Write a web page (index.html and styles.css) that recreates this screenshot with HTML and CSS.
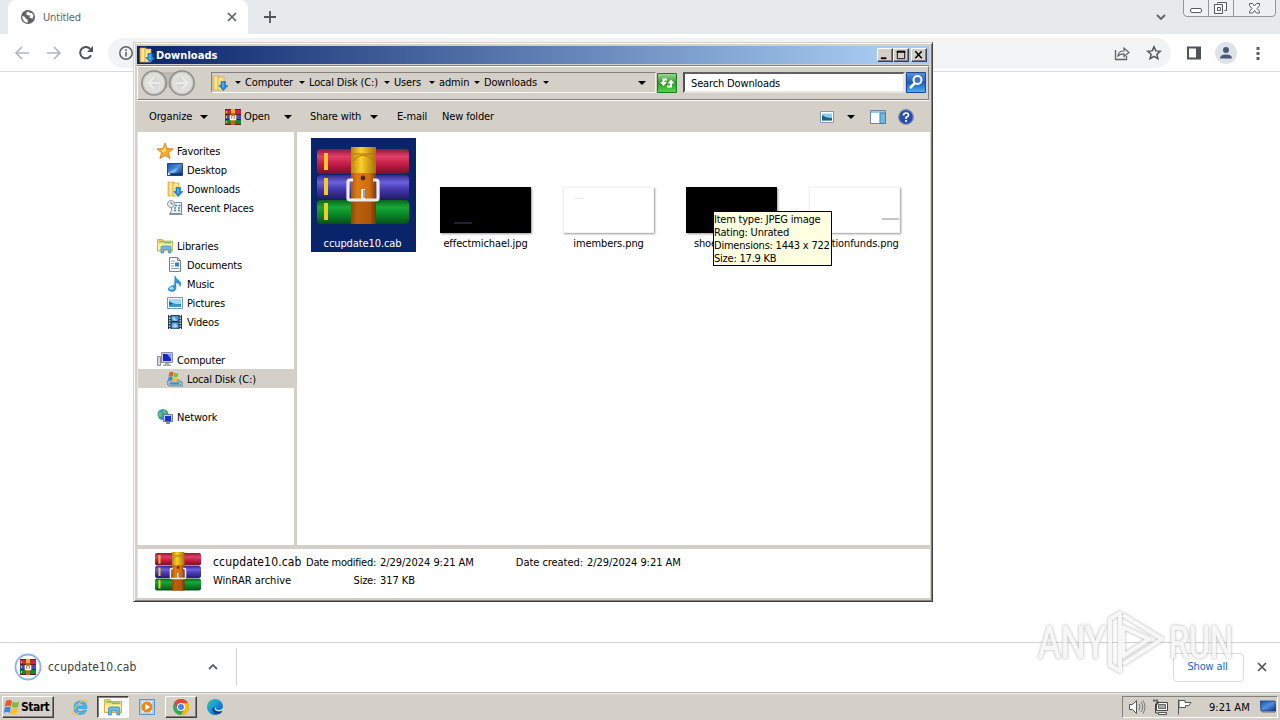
FILE: index.html
```html
<!DOCTYPE html>
<html lang="en">
<head>
<meta charset="utf-8">
<title>Downloads</title>
<link rel="stylesheet" href="styles.css">
</head>
<body>
<svg class="defs" aria-hidden="true">
<defs>
<linearGradient id="gr" x1="0" y1="0" x2="0" y2="1"><stop offset="0" stop-color="#8c1838"/><stop offset=".3" stop-color="#e04068"/><stop offset=".6" stop-color="#c41c44"/><stop offset="1" stop-color="#74102c"/></linearGradient>
<linearGradient id="gb" x1="0" y1="0" x2="0" y2="1"><stop offset="0" stop-color="#34288c"/><stop offset=".3" stop-color="#6c60dc"/><stop offset=".6" stop-color="#4438b0"/><stop offset="1" stop-color="#241c68"/></linearGradient>
<linearGradient id="gg" x1="0" y1="0" x2="0" y2="1"><stop offset="0" stop-color="#0a6418"/><stop offset=".3" stop-color="#18a838"/><stop offset=".6" stop-color="#0a8828"/><stop offset="1" stop-color="#065018"/></linearGradient>
<linearGradient id="gs"><stop offset="0" stop-color="#a85808"/><stop offset=".25" stop-color="#e07c14"/><stop offset=".75" stop-color="#d06c10"/><stop offset="1" stop-color="#7c3c04"/></linearGradient>
<linearGradient id="gy"><stop offset="0" stop-color="#b88410"/><stop offset=".4" stop-color="#fcd028"/><stop offset="1" stop-color="#a87008"/></linearGradient>
<linearGradient id="gf"><stop offset="0" stop-color="#e8bc50"/><stop offset=".5" stop-color="#fff0a0"/><stop offset="1" stop-color="#e4c050"/></linearGradient>
<linearGradient id="gscr" x1="0" y1="0" x2="1" y2="1"><stop offset="0" stop-color="#1450a8"/><stop offset=".5" stop-color="#5090dc"/><stop offset="1" stop-color="#082c78"/></linearGradient>
<linearGradient id="gedge" x1="0" y1="0" x2="1" y2="1"><stop offset="0" stop-color="#38c878"/><stop offset=".4" stop-color="#18a0dc"/><stop offset="1" stop-color="#0848a0"/></linearGradient>
<linearGradient id="ggo" x1="0" y1="0" x2="0" y2="1"><stop offset="0" stop-color="#5c94dc"/><stop offset=".5" stop-color="#2058c0"/><stop offset="1" stop-color="#48b8f0"/></linearGradient>
<linearGradient id="gref" x1="0" y1="0" x2="0" y2="1"><stop offset="0" stop-color="#a0d898"/><stop offset=".5" stop-color="#289c30"/><stop offset="1" stop-color="#58d848"/></linearGradient>
<radialGradient id="gbtn"><stop offset="0" stop-color="#d0d0cc"/><stop offset=".75" stop-color="#e2e2de"/><stop offset="1" stop-color="#b0b0ac"/></radialGradient>
<symbol id="rar" viewBox="0 0 92 78" preserveAspectRatio="none">
<rect y="2" width="92" height="25" rx="4" fill="url(#gr)"/><rect y="28" width="92" height="24" rx="4" fill="url(#gb)"/><rect y="53" width="92" height="24" rx="4" fill="url(#gg)"/>
<path d="M7 6h4v17h-4zM7 31h4v17h-4zM7 56h4v17h-4z" fill="#f8c828"/>
<rect x="34" y="26" width="25" height="51" fill="url(#gs)"/>
<path d="M34 53h25v24H34z" fill="#702c00" opacity=".35"/>
<path d="M34 0h25v26H34z" fill="url(#gy)"/><path d="M36 14q10-12 21 0M36 7h20" fill="none" stroke="#a87408" stroke-width="1"/>
<circle cx="46" cy="31" r="2.400" fill="#5c2804"/>
<path d="M36 33h-3q-2 0-2 2v16q0 2 2 2h26q2 0 2-2V35q0-2-2-2h-3" fill="none" stroke="#ececec" stroke-width="3.200"/><path d="M46 42v11" stroke="#f0f0f0" stroke-width="4"/><path d="M47 43v8" stroke="#555"/>
</symbol>
<symbol id="rars" viewBox="0 0 16 16"><path d="M0 1h16v4H0z" fill="#cc2448"/><path d="M0 6h16v4H0z" fill="#4848b8"/><path d="M0 11h16v4H0z" fill="#108830"/><path d="M0 0h16v1H0zM0 5h16v1H0zM0 10h16v1H0zM0 15h16v1H0z" fill="#58202c"/><path d="M1 2h1v2H1zM1 7h1v2H1zM1 12h1v2H1z" fill="#fc0"/><path d="M6 0h4v16H6z" fill="#c46810"/><path d="M6 0h4v4H6z" fill="#ecb428"/><path d="M5.500 6v4.500h5V6M8 7v3" fill="none" stroke="#fff" stroke-width="1.500"/></symbol>
<symbol id="dl" viewBox="0 0 16 16"><path d="M1 1h6v14H1z" fill="url(#gf)" stroke="#d8ac40" stroke-width=".7"/><path d="M6 2h6v13H6z" fill="#fae48c" stroke="#d0a840" stroke-width=".7"/><path d="M9 6.500h4.500v4H16l-4.700 5-4.500-5H9z" fill="#2888d8" stroke="#1464b0" stroke-width=".6"/><path d="M11 7.500v5" stroke="#80c8fc"/></symbol>
<symbol id="star" viewBox="0 0 16 16"><path d="M8 0l2.200 5.600 5.800.3-4.500 3.900 1.600 5.800L8 12.500l-5.100 3.100 1.600-5.800L0 5.900l5.800-.3z" fill="#fca828" stroke="#d87820" stroke-width=".8"/><path d="M8 3l1 4.500L6 9.500 4 7.300l2.800-.5z" fill="#ffe890"/></symbol>
<symbol id="desk" viewBox="0 0 16 16"><path d="M.5 1.500h15v12H.5z" fill="url(#gscr)" stroke="#20488c"/><path d="M1 11.500h14v1.500H1z" fill="#0c2c68"/><path d="M1 12q4-5 10-6l-2 4z" fill="#a4d4f8" opacity=".55"/><path d="M1 10l2.500 3H1z" fill="#e0ecf8"/></symbol>
<symbol id="recent" viewBox="0 0 16 16"><path d="M4.500 2.500h10v11H3l1.500-3z" fill="#eef4f8" stroke="#7888a0"/><path d="M2 13.500h13l1 1.500H2z" fill="#8898a8"/><path d="M8 5.500h2M11.500 5.500h2M7 8h2M11 8h2M7 10.500h2M11 10.500h2" stroke="#4880b8" stroke-width="1.300"/><circle cx="4" cy="4" r="3.500" fill="#e8f0f4" stroke="#8898a8"/><path d="M4 2v2h2" fill="none" stroke="#506070" stroke-width=".8"/></symbol>
<symbol id="lib" viewBox="0 0 16 16"><path d="M.5 13V1.500h5l1 1.500h9v10z" fill="#f8dc78" stroke="#c8a440" stroke-width=".8"/><path d="M2 3.500h5M7 4.500h7" stroke="#80bc68" stroke-width="1.500"/><path d="M1 6h14v6H1z" fill="#fff0a0"/><path d="M4 15V9.500q0-1.500 1.500-1.500h7Q14 8 14 9.500V15h-2.500v-3.500h-5V15z" fill="#70b8e8" stroke="#3880b4" stroke-width=".7"/></symbol>
<symbol id="doc" viewBox="0 0 16 16"><path d="M2.500.5h8l3 3v11h-11z" fill="#f8fcff" stroke="#708098"/><path d="M4 4h4M4 6.500h3M4 9h3M4 11.500h8" stroke="#88a8c8"/><path d="M8 5.500h4v4H8z" fill="#3880c8"/><path d="M10.500.5v3h3" fill="none" stroke="#708098"/></symbol>
<symbol id="music" viewBox="0 0 16 16"><path d="M8 0q1 3 4 4.500 3 2 1 6 .3-3-4-4v6Q8 16 4.500 15.500 0 14.500 1.500 12 4 9 7.500 9.500z" fill="#2c98dc" stroke="#1878bc" stroke-width=".5"/><ellipse cx="4.500" cy="12.300" rx="2.200" ry="1.500" fill="#9cdcfc"/></symbol>
<symbol id="pic" viewBox="0 0 16 16"><path d="M.5 2.500h15v11H.5z" fill="#fff" stroke="#7898b0"/><path d="M2 4h12v8H2z" fill="#98dcf4"/><path d="M2 6q5 4 12 3v3H2z" fill="#18608c"/><path d="M2 10q5-2 12 0v2H2z" fill="#389cc0"/></symbol>
<symbol id="video" viewBox="0 0 16 16"><path d="M1 1h14v14H1z" fill="#283848"/><path d="M4.500 2h7v5h-7zM4.500 8.500h7v6h-7z" fill="#4898dc"/><path d="M6 2l4 4-2 1-3-2zM5 12l3-3 3 3-3 2z" fill="#9cd0f4"/><path d="M2.700 1v14M13.300 1v14" stroke="#e8f0f4" stroke-width="1.400" stroke-dasharray="1.300 1.300"/></symbol>
<symbol id="comp" viewBox="0 0 16 16"><path d="M.5 4.500h3v9h-3z" fill="#d8d8dc" stroke="#888c98"/><path d="M4.500.5h11v10h-11z" fill="#c8ccd8" stroke="#8890a0"/><path d="M6 2h8v7H6z" fill="#1824c0"/><path d="M10 2h4v5z" fill="#78a0fc"/><path d="M8 11h4v1.500h2V14H6v-1.500h2z" fill="#a8a8b0"/></symbol>
<symbol id="flag" viewBox="0 0 16 16"><path d="M2 2q3-2 6 0L7 7.500q-3-1.500-6.200 0z" fill="#ec5828"/><path d="M8.800 2.500q3 2 6.200 0L14 8q-3 1.500-6.200 0z" fill="#78c030"/><path d="M.8 8.500q3-1.500 6 0l-1 5.500q-3-2-5.800 0z" fill="#3c88dc"/><path d="M7.500 9q3 1.500 6.200 0l-1 5.500q-3 2-6.200 0z" fill="#fcc020"/></symbol>
<symbol id="disk" viewBox="0 0 16 16"><path d="M1 9h11l4 3v3H2l-2-2z" fill="#a8b8c0" stroke="#607880" stroke-width=".7"/><path d="M3 11.500h11v2H3z" fill="#289ca8"/><path d="M12 12h2v1h-2z" fill="#70fc50"/><use href="#flag" x="1" y="0" width="11" height="11"/></symbol>
<symbol id="net" viewBox="0 0 16 16"><circle cx="6" cy="5.500" r="5.500" fill="#3890c8"/><path d="M2 3q4 0 3 3T1 8zM5 1q4 0 5 3L7 5z" fill="#68c458"/><path d="M6.500 5.500h9v7h-9z" fill="#c8ccd8" stroke="#687898"/><path d="M8 7h6v5H8z" fill="#1830cc"/><path d="M9 13h4v2H9z" fill="#889"/></symbol>
<symbol id="monitor" viewBox="0 0 16 16"><path d="M0 2h15l1 10H1z" fill="url(#gscr)" stroke="#183c78" stroke-width=".8"/><path d="M2 13h13" stroke="#687078"/></symbol>
<symbol id="dn" viewBox="0 0 8 4" preserveAspectRatio="none"><path d="M0 0h8L4 4z"/></symbol>
<symbol id="chev" viewBox="0 0 10 6"><path d="M1 1l4 4 4-4" fill="none" stroke="currentColor" stroke-width="1.800"/></symbol>
<symbol id="x" viewBox="0 0 10 10"><path d="M1 1l8 8M9 1L1 9" stroke="currentColor" stroke-width="1.700"/></symbol>
</defs>
</svg>

<div class="browser">
  <div class="tabstrip">
    <div class="tab">
      <svg class="globe" viewBox="0 0 14 14"><circle cx="7" cy="7" r="7" fill="#5f6368"/><path d="M1.300 6q3 0 3.200 2.500 2.500 0 2.300 4.200Q2 12.500 1.300 7zM5.500 2.500L8 1.500l.5 1.500H11l1.500 2.500-1 3.200L8.500 7.500 9 5.500 5.500 5z" fill="#fff"/></svg>
      <span class="tab-title">Untitled</span>
      <svg class="tab-x"><use href="#x"/></svg>
    </div>
    <svg class="plus" viewBox="0 0 12 12"><path d="M6 0v12M0 6h12" stroke="#505458" stroke-width="1.800"/></svg>
    <svg class="tab-search"><use href="#chev"/></svg>
    <svg class="caption" viewBox="0 0 93 18"><path d="M.5-1v14q0 3.500 3.500 3.500h85q3.500 0 3.500-3.500V-1M25.500 0v16M50.500 0v16" fill="#eef1f3" stroke="#92979c"/><rect x="7.500" y="8.500" width="11" height="4" rx="1.500" fill="#fff" stroke="#55595e"/><path d="M34.500 3.500v-1h9v8h-2M31.500 4.500h8v9h-8zM34.500 7.500h3v3h-3z" fill="#fff" stroke="#55595e"/><path d="M66.500 3.500h3l2 2.500 2-2.500h3v2L74 8.500l2.500 3v1.500h-3l-2-2.500-2 2.500h-3v-1.500l2.500-3-2.500-3z" fill="#fff" stroke="#55595e"/></svg>
  </div>
  <div class="toolbar">
    <svg class="nav-arrow" viewBox="0 0 14 14"><path d="M14 7H1M7 1L1 7l6 6" fill="none" stroke="#b4b7ba" stroke-width="1.700"/></svg>
    <svg class="nav-arrow" viewBox="0 0 14 14"><path d="M0 7h13M7 1l6 6-6 6" fill="none" stroke="#b4b7ba" stroke-width="1.700"/></svg>
    <svg class="reload" viewBox="0 0 14 14"><path d="M12 9.200A5.700 5.700 0 1 1 11.300 3" fill="none" stroke="#505458" stroke-width="2"/><path d="M14 0v6H8z" fill="#505458"/></svg>
    <div class="omnibox">
      <svg class="info" viewBox="0 0 14 14"><circle cx="7" cy="7" r="6.200" fill="none" stroke="#5f6368" stroke-width="1.500"/><path d="M7 6v4.500M7 3.300v1.600" stroke="#5f6368" stroke-width="1.600"/></svg>
      <svg class="share" viewBox="0 0 16 16"><path d="M1.500 5v9.500h11V11" fill="none" stroke="#5f6368" stroke-width="1.300"/><path d="M4 11q0-5 6-5V3l5 4.500L10 11.500V8.800q-4 0-6 2.200z" fill="none" stroke="#5f6368" stroke-width="1.200"/></svg>
      <svg class="mark" viewBox="0 0 16 16"><path d="M8 1.800l1.800 4.100 4.500.4-3.400 3 1 4.400L8 11.400l-3.900 2.300 1-4.400-3.400-3 4.500-.4z" fill="none" stroke="#505458" stroke-width="1.500"/></svg>
    </div>
    <svg class="panel" viewBox="0 0 14 14"><path d="M1 1.500h12v11H1z" fill="none" stroke="#505458" stroke-width="2"/><path d="M9 1h5v12H9z" fill="#505458"/></svg>
    <svg class="avatar" viewBox="0 0 22 22"><circle cx="11" cy="11" r="11" fill="#dfe2e7"/><circle cx="11" cy="8" r="3" fill="#4b5878"/><path d="M5 16.500q0-4 6-4t6 4z" fill="#4b5878"/></svg>
    <svg class="kebab" viewBox="0 0 4 14"><path d="M.5 1h3v3h-3zM.5 6h3v3h-3zM.5 11h3v3h-3z" fill="#5f6368"/></svg>
  </div>
  <div class="page"></div>
  <div class="shelf">
    <div class="download">
      <svg class="ring" viewBox="0 0 28 28"><circle cx="14" cy="14" r="12.500" fill="#fff" stroke="#8ab0ec" stroke-width="1.800"/><use href="#rars" x="6" y="6" width="16" height="16"/></svg>
      <span class="download-name">ccupdate10.cab</span>
      <svg class="up"><use href="#chev"/></svg>
    </div>
    <button class="show-all">Show all</button>
    <svg class="shelf-x"><use href="#x"/></svg>
  </div>
</div>

<div class="taskbar">
  <div class="start"><svg class="i16"><use href="#flag"/></svg><b>Start</b></div>
  <div class="quick ie"><svg class="i18" viewBox="0 0 18 18"><path d="M16 10.500H6q.4 3 3.500 3 1.700 0 2.600-1.200h3.400Q14 16.500 9.500 16.500q-6.500 0-6.500-6.700T9.500 3q6.500 0 6.500 7.500zM6 8h7Q12.500 5.800 9.500 5.800T6 8z" fill="#48b4ec" stroke="#1c80c0" stroke-width=".5"/><path d="M15.500 6q2.500-5-1.500-4-5 1.500-9.500 7-5 7-1 7 2 0 4.500-1.500" fill="none" stroke="#ecc448" stroke-width="1.100"/></svg></div>
  <div class="quick folder"><svg class="i18"><use href="#lib"/></svg></div>
  <div class="quick wmp"><svg class="i16" viewBox="0 0 16 16"><path d="M.5.5h15v15H.5z" fill="#a8d4f4" stroke="#5894c8"/><path d="M3 2.500h10v11H3z" fill="#e8f4fc"/><circle cx="8" cy="8" r="5.500" fill="#f48418"/><path d="M6.200 4.800l5 3.200-5 3.200z" fill="#fff"/></svg></div>
  <div class="quick chrome"><svg class="i16" viewBox="0 0 16 16"><circle cx="8" cy="8" r="8" fill="#34a853"/><path d="M1.100 4A8 8 0 0 1 14.900 4H8L4.500 10z" fill="#ea4335"/><path d="M14.900 4A8 8 0 0 1 8 16l3.500-6L8 4z" fill="#fbbc05"/><circle cx="8" cy="8" r="4" fill="#fff"/><circle cx="8" cy="8" r="3" fill="#4285f4"/></svg></div>
  <div class="quick edge"><svg class="i16" viewBox="0 0 16 16"><circle cx="8" cy="8" r="8" fill="url(#gedge)"/><path d="M7 8q-3 1.500-1 4.500 2 3 7 2 2-1 2.500-2.500-4 2-7.500-.5-1.200-1-1-3.500z" fill="#0c3c90"/><path d="M8.500 8q0 3 3 3 4 0 4.500-3v3q-3 2-6 1-3.500-1.500-1.500-4z" fill="#d4e8e8"/></svg></div>
  <div class="tray">
    <svg class="i18" viewBox="0 0 18 18"><path d="M1.500 6.500h3l4-4v13l-4-4h-3z" fill="#fff" stroke="#555"/><path d="M11 6q2 3 0 6M13 4q3.500 5 0 10M15 2.500q4 6.500 0 13" fill="none" stroke="#777"/></svg>
    <svg class="i18" viewBox="0 0 18 18"><path d="M4.500 4.500h11v8h-11z" fill="#fff" stroke="#444"/><path d="M6.500 6.500h7v4h-7z" fill="#aaa" stroke="#666"/><path d="M6.500 14.500h8v2h-8z" fill="#fff" stroke="#555"/><path d="M2 1v2M5 1v2M1 3h5v3H3.500v9H6" fill="none" stroke="#444"/></svg>
    <svg class="i18" viewBox="0 0 18 18"><path d="M2.500 1.500v15M3 2.500h6v2h6l-2 3H9.500v2H3z" fill="#fff" stroke="#555"/></svg>
    <span class="clock">9:21 AM</span>
    <svg class="i16"><use href="#monitor"/></svg>
  </div>
</div>

<div class="window">
  <div class="titlebar">
    <svg class="i16"><use href="#dl"/></svg><b>Downloads</b>
    <svg class="wbtn" viewBox="0 0 15 13"><path d="M3 9h6v2H3z"/></svg><svg class="wbtn" viewBox="0 0 15 13"><path d="M3.500 2.500h8v8h-8zM3 2.800h9" fill="none" stroke="#000"/><path d="M3 2h9v2H3z"/></svg><svg class="wbtn last" viewBox="0 0 15 13"><path d="M3.500 2.500l7 7.500M10.500 2.500l-7 7.500" stroke="#000" stroke-width="1.600"/></svg>
  </div>
  <div class="rebar">
    <svg class="backfwd" viewBox="0 0 56 28"><path d="M14 3h28v18q-14-5-28 0z" fill="#bdb9b2"/><circle cx="14" cy="14" r="12.200" fill="url(#gbtn)" stroke="#8a8a84" stroke-width="1.300"/><circle cx="42" cy="14" r="12.200" fill="url(#gbtn)" stroke="#8a8a84" stroke-width="1.300"/><path d="M20 14H9M14 8.500L8.500 14l5.500 5.500M36 14h11M42 8.500l5.500 5.500-5.500 5.500" fill="none" stroke="#ececea" stroke-width="2"/></svg>
    <div class="address">
      <svg class="i16"><use href="#dl"/></svg>
      <svg class="sep"><use href="#dn"/></svg><span class="c1">Computer</span>
      <svg class="sep"><use href="#dn"/></svg><span class="c2">Local Disk (C:)</span>
      <svg class="sep"><use href="#dn"/></svg><span class="c3">Users</span>
      <svg class="sep"><use href="#dn"/></svg><span class="c4">admin</span>
      <svg class="sep"><use href="#dn"/></svg><span class="c5">Downloads</span>
      <svg class="sep"><use href="#dn"/></svg>
      <svg class="drop"><use href="#dn"/></svg>
    </div>
    <svg class="refresh" viewBox="0 0 20 20"><path d="M.5.5h19v19H.5z" fill="url(#gref)" stroke="#187c20"/><path d="M10 6.500H6.500V10M10 13.500h4V10" fill="none" stroke="#fff" stroke-width="2"/><path d="M3 9h7l-3.500 4zM10.500 10.500h7L14 6.500z" fill="#fff"/></svg>
    <div class="search">Search Downloads</div>
    <svg class="go" viewBox="0 0 20 21"><path d="M.5.500h19v20H.5z" fill="url(#ggo)" stroke="#184898"/><circle cx="11.500" cy="8" r="4" fill="#3c74cc" stroke="#fff" stroke-width="2"/><path d="M9 11l-5 5" stroke="#fff" stroke-width="2.500"/></svg>
  </div>
  <div class="commands">
    <span class="m1">Organize</span><svg class="tri"><use href="#dn"/></svg>
    <svg class="i16 openicon"><use href="#rars"/></svg><span class="m2">Open</span><svg class="tri"><use href="#dn"/></svg>
    <span class="m3">Share with</span><svg class="tri"><use href="#dn"/></svg>
    <span class="m4">E-mail</span><span class="m5">New folder</span>
    <svg class="view" viewBox="0 0 14 12" preserveAspectRatio="none"><path d="M.5.5h13v11H.5z" fill="#fff" stroke="#8898a8"/><path d="M2 2.500h10v7H2z" fill="#88d0f0"/><path d="M2 4q4 3 10 3v2.500H2z" fill="#18608c"/></svg><svg class="tri viewtri"><use href="#dn"/></svg>
    <svg class="preview" viewBox="0 0 16 14"><path d="M.5.5h15v13H.5z" fill="#fff" stroke="#6888a8"/><path d="M1 1h14v2H1z" fill="#a0c4e4"/><path d="M10 3h5.500v10.500H10z" fill="#70b8e0" stroke="#4080b0"/></svg>
    <svg class="help" viewBox="0 0 16 16"><circle cx="8" cy="8" r="7.300" fill="#284cb4" stroke="#7c88a8" stroke-width="1.200"/><path d="M5.500 6.500Q5.500 4 8 4t2.500 2.200Q10.500 7.500 8 8.300V10M8 11v2" fill="none" stroke="#fff" stroke-width="1.700"/></svg>
  </div>
  <div class="content">
    <div class="sidebar">
      <div class="item top"><svg class="i16"><use href="#star"/></svg>Favorites</div>
      <div class="item"><svg class="i16"><use href="#desk"/></svg>Desktop</div>
      <div class="item"><svg class="i16"><use href="#dl"/></svg>Downloads</div>
      <div class="item"><svg class="i16"><use href="#recent"/></svg>Recent Places</div>
      <div class="item top"><svg class="i16"><use href="#lib"/></svg>Libraries</div>
      <div class="item"><svg class="i16"><use href="#doc"/></svg>Documents</div>
      <div class="item"><svg class="i16"><use href="#music"/></svg>Music</div>
      <div class="item"><svg class="i16"><use href="#pic"/></svg>Pictures</div>
      <div class="item"><svg class="i16"><use href="#video"/></svg>Videos</div>
      <div class="item top"><svg class="i16"><use href="#comp"/></svg>Computer</div>
      <div class="item selected"><svg class="i16"><use href="#disk"/></svg>Local Disk (C:)</div>
      <div class="item top"><svg class="i16"><use href="#net"/></svg>Network</div>
    </div>
    <div class="files">
      <div class="file picked"><svg class="big"><use href="#rar"/></svg><span>ccupdate10.cab</span></div>
      <div class="file"><div class="thumb dark"><i class="streak s1"></i></div><span>effectmichael.jpg</span></div>
      <div class="file"><div class="thumb"><i class="streak s2"></i></div><span>imembers.png</span></div>
      <div class="file"><div class="thumb dark"></div><span class="short">shoe.jpg</span></div>
      <div class="file"><div class="thumb"><i class="streak s3"></i></div><span class="long">auctionfunds.png</span></div>
    </div>
  </div>
  <div class="details">
    <svg class="dicon"><use href="#rar"/></svg>
    <div class="dname"><span class="large">ccupdate10.cab</span><span>WinRAR archive</span></div>
    <div class="dlabel"><span>Date modified:</span><span>Size:</span></div>
    <div class="dvalue"><span>2/29/2024 9:21 AM</span><span>317 KB</span></div>
    <div class="dlabel created"><span>Date created:</span></div>
    <div class="dvalue"><span>2/29/2024 9:21 AM</span></div>
  </div>
</div>

<div class="tooltip">Item type: JPEG image<br>Rating: Unrated<br>Dimensions: 1443 x 722<br>Size: 17.9 KB</div>

<svg class="watermark" viewBox="0 0 210 80"><g class="mark-text"><text x="8" y="56" textLength="68" lengthAdjust="spacingAndGlyphs">ANY</text><text x="139" y="56" textLength="64" lengthAdjust="spacingAndGlyphs">RUN</text></g><g class="mark-logo"><path d="M80 17v46l10 6V11z"/><path d="M93 13l39 24-39 25M93 25v29l26-17z"/></g></svg>
</body>
</html>
```
FILE: styles.css
```css
* { box-sizing: border-box; }
body {
  margin: 0;
  width: 1280px;
  height: 720px;
  overflow: hidden;
  position: relative;
  display: flex;
  flex-direction: column;
  background: #fff;
  color: #000;
  font: 11px/13px "DejaVu Sans Condensed", "DejaVu Sans", sans-serif;
  font-stretch: condensed;
  letter-spacing: -0.15px;
  white-space: nowrap;
}
svg { flex: none; display: block; }
.defs { position: absolute; width: 0; height: 0; }
.i16 { width: 16px; height: 16px; }
.i18 { width: 18px; height: 18px; }

/* Browser */
.browser { height: 692px; display: flex; flex-direction: column; }
.tabstrip { height: 34px; background: #e7eaed; display: flex; padding-left: 8px; }
.tab {
  width: 240px; height: 34px; background: #fff; border-radius: 8px 8px 0 0;
  display: flex; align-items: center; padding: 0 11px 0 13px; color: #5f6368;
}
.globe { width: 14px; height: 14px; }
.tab-title { margin-left: 8px; flex: 1; letter-spacing: -0.15px; }
.tab-x { width: 10px; height: 10px; color: #5f6368; }
.plus { width: 12px; height: 12px; margin: 11px 0 0 16px; }
.tab-search { width: 10px; height: 6px; margin: 14px 17px 0 auto; color: #5f6368; }
.caption { width: 93px; height: 18px; margin-right: 4px; }
.toolbar { height: 38px; border-bottom: 1px solid #d9dadc; display: flex; align-items: center; padding-left: 15px; }
.nav-arrow { width: 14px; height: 14px; margin-right: 18px; }
.reload { width: 14px; height: 14px; margin-right: 15px; }
.omnibox { width: 1063px; height: 30px; border-radius: 15px; background: #f1f3f5; display: flex; align-items: center; padding-left: 11px; }
.info { width: 14px; height: 14px; }
.share { width: 16px; height: 16px; margin-left: auto; margin-right: 16px; }
.mark { width: 16px; height: 16px; margin-right: 9px; }
.panel { width: 14px; height: 14px; margin-left: 16px; }
.avatar { width: 22px; height: 22px; margin-left: 14px; }
.kebab { width: 4px; height: 14px; margin-left: 19px; }
.page { flex: 1; }
.shelf { height: 50px; border-top: 1px solid #d0d2d4; display: flex; align-items: center; padding-bottom: 1px; }
.download { width: 237px; height: 38px; border-right: 1px solid #cfd1d3; display: flex; align-items: center; padding-left: 14px; }
.ring { width: 28px; height: 28px; }
.download-name { width: 166px; padding-left: 6px; font-size: 12px; letter-spacing: 0.15px; color: #3c4043; }
.up { width: 10px; height: 6px; color: #5f6368; transform: rotate(180deg); }
.show-all {
  margin-left: auto; width: 71px; height: 29px; border: 1px solid #d8dade; border-radius: 4px;
  background: transparent; color: #1a66c8; font: inherit; letter-spacing: -0.15px; padding: 0 2px 1px 0;
}
.shelf-x { width: 10px; height: 10px; margin: 0 13px; color: #505458; }

/* Taskbar */
.taskbar { height: 28px; background: #d4d0c8; border-top: 1px solid #b8b8b4; display: flex; align-items: center; padding: 1px 2px 0; box-shadow: inset 0 1px #f0eeea; }
.start {
  width: 52px; height: 22px; display: flex; align-items: center; padding-left: 1px; gap: 1px;
  border: 1px solid; border-color: #fff #404040 #404040 #fff; box-shadow: inset -1px -1px #808080;
  font-size: 12px; letter-spacing: -0.5px; margin-right: 9px;
}
.quick { height: 22px; display: flex; align-items: center; justify-content: center; }
.ie { width: 34px; }
.folder { width: 32px; border: 1px solid; border-color: #404040 #fff #fff #404040; background: #fbfaf8; box-shadow: inset 1px 1px #808080; }
.wmp { width: 36px; }
.chrome { width: 32px; border: 1px solid; border-color: #fff #404040 #404040 #fff; box-shadow: inset -1px -1px #808080; }
.edge { width: 36px; }
.tray { margin-left: auto; width: 156px; height: 22px; border: 1px solid; border-color: #808080 #fff #fff #808080; display: flex; align-items: center; padding-left: 5px; gap: 6px; }
.clock { width: 45px; margin-left: 9px; letter-spacing: 0; }

/* Explorer window */
.window {
  position: absolute; left: 133px; top: 42px; width: 800px; height: 560px; padding: 2px;
  background: #d4d0c8; border: 1px solid; border-color: #d4d0c8 #404040 #404040 #d4d0c8;
  box-shadow: inset 1px 1px #fff, inset -1px -1px #808080;
  display: flex; flex-direction: column;
}
.titlebar { height: 18px; margin: 1px 1px 0; padding: 0 2px; display: flex; align-items: center; background: linear-gradient(90deg, #0a246a, #a6caf0 94%); color: #fff; }
.titlebar b { margin-left: 1px; flex: 1; font-size: 11px; letter-spacing: 0.05px; }
.wbtn { width: 16px; height: 14px; background: #d4d0c8; border: 1px solid; border-color: #fff #404040 #404040 #fff; box-shadow: inset -1px -1px #808080; }
.wbtn.last { margin-left: 2px; }
.rebar { height: 34px; margin: 2px 1px 0; border: 1px solid #808080; border-top-color: #fff; border-left-color: #fff; box-shadow: 0 1px #fff, 0 -1px #808080; display: flex; align-items: center; padding: 0 0 1px 2px; }
.backfwd { width: 56px; height: 28px; margin: 1px 15px 0 0; }
.address { width: 445px; height: 21px; border: 1px solid; border-color: #808080 #eee #fff #808080; display: flex; align-items: center; padding-left: 0; }
.sep { width: 6px; height: 3px; margin: 0 4px 0 5px; }
.address .i16 { margin-right: 2px; }
.c1 { width: 49px; }
.c2 { width: 70px; }
.c3 { width: 30px; }
.c4 { width: 30px; }
.c5 { width: 54px; }
.drop { width: 8px; height: 4px; margin-left: auto; margin-right: 9px; }
.refresh { width: 20px; height: 20px; margin: 0 6px 0 1px; }
.search { width: 222px; height: 21px; background: #fff; border: 2px solid; border-color: #606060 #e8e6e0 #e8e6e0 #505050; padding: 3px 6px; }
.go { width: 20px; height: 21px; margin-left: 1px; }
.commands { height: 32px; display: flex; align-items: center; padding: 1px 0 0 13px; }
.tri { width: 8px; height: 4px; }
.m1 { width: 51px; }
.openicon { margin: 0 3px 0 17px; }
.m2 { width: 40px; }
.m3 { width: 60px; margin-left: 18px; }
.m4 { width: 45px; margin-left: 19px; }
.m5 { width: 70px; }
.view { width: 14px; height: 12px; margin-left: auto; }
.viewtri { margin: 0 15px 0 13px; }
.preview { width: 16px; height: 14px; margin-right: 12px; }
.help { width: 16px; height: 16px; margin-right: 16px; }
.content { height: 413px; display: flex; margin: 0 0 0 1px; }
.sidebar { width: 157px; background: #fff; border-left: 1px solid #e8e6e0; padding-top: 9px; }
.item { height: 19px; display: flex; align-items: center; gap: 4px; padding-left: 29px; padding-top: 1px; }
.item .i16 { margin-top: -1px; }
.item.top { padding-left: 19px; }
.item + .top { margin-top: 19px; }
.item.selected { background: #d4d0c8; }
.files { flex: 1; margin-left: 3px; background: #fff; display: flex; padding: 6px 0 0 14px; gap: 18px; }
.file { width: 105px; height: 114px; display: flex; flex-direction: column; align-items: center; padding: 49px 2px 0 0; }
.file span { margin-top: 4px; letter-spacing: -0.1px; }
.file .short { margin-right: 34px; }
.file .long { margin-left: 4px; }
.picked { background: #0a246a; color: #fff; padding-top: 9px; }
.picked span { margin-top: 12px; }
.big { width: 92px; height: 78px; }
.thumb { width: 91px; height: 46px; position: relative; background: #fff; border: 1px solid #f2f2f2; box-shadow: 1px 1px 2px #999; }
.thumb.dark { background: #000; border-color: #000; }
.streak { position: absolute; height: 2px; }
.s1 { left: 13px; top: 34px; width: 18px; background: #1c2038; }
.s2 { left: 10px; top: 10px; width: 9px; height: 1px; background: #e8e8ee; }
.s3 { left: 72px; top: 30px; width: 17px; background: #c4c4d2; }
.details { flex: 1; margin: 4px 0 1px 1px; border-left: 1px solid #e8e6e0; background: #fff; display: flex; padding: 3px 0 0 17px; }
.dicon { width: 46px; height: 39px; margin-right: 12px; }
.dname, .dlabel, .dvalue { display: flex; flex-direction: column; gap: 5px; padding-top: 4px; }
.dname { width: 92px; }
.dname .large { font-size: 12px; letter-spacing: 0.15px; }
.dname span + span { letter-spacing: 0; }
.dlabel { width: 71px; align-items: flex-end; letter-spacing: -0.25px; }
.dvalue { width: 135px; padding-left: 4px; letter-spacing: -0.05px; }
.created { width: 72px; letter-spacing: -0.05px; }

.tooltip {
  position: absolute; left: 713px; top: 211px; width: 119px; height: 55px; padding: 1px 0 0;
  background: #ffffe1; border: 1px solid #000; letter-spacing: -0.22px;
}
.watermark { position: absolute; left: 1030px; top: 602px; width: 210px; height: 80px; overflow: visible; filter: drop-shadow(0 0 1.5px #999); opacity: .8; }
.mark-text { fill: #f6f6f6; stroke: #f6f6f6; stroke-width: 1; font: 45px Roboto, sans-serif; letter-spacing: 0; }
.mark-logo { fill: none; stroke: #f6f6f6; stroke-width: 4; stroke-linejoin: round; }
```
